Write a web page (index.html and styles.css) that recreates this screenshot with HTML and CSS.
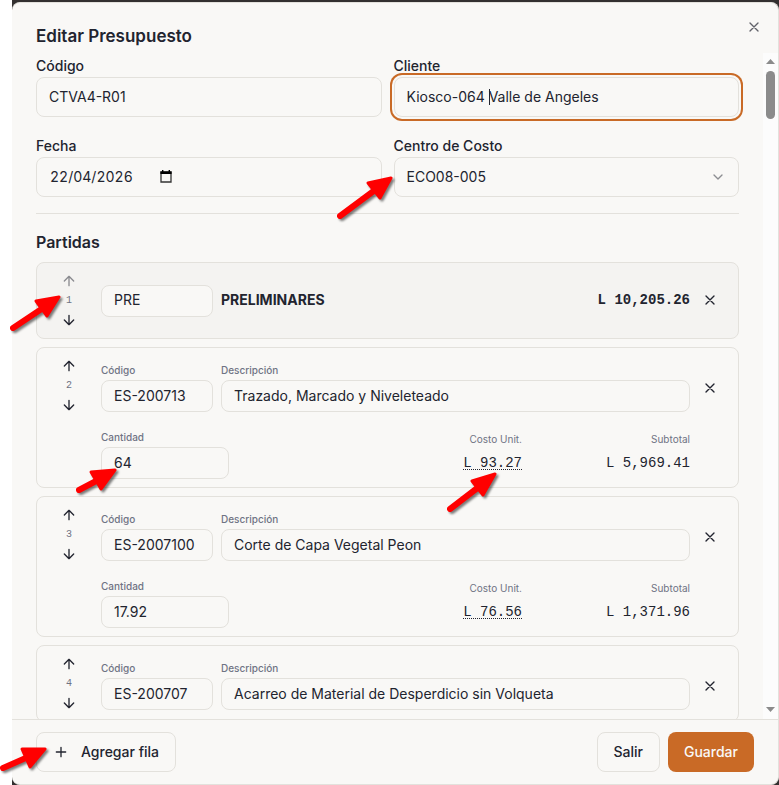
FILE: index.html
```html
<!DOCTYPE html>
<html lang="es">
<head>
    <meta charset="UTF-8">
    <meta name="viewport" content="width=device-width, initial-scale=1.0">
    <title>Editar Presupuesto</title>
    <link rel="stylesheet" href="styles.css">
</head>
<body>
    <!-- Shared icons -->
    <svg class="sprite" aria-hidden="true">
        <symbol id="icon-x" viewBox="0 0 24 24"><path d="M18 6 6 18M6 6l12 12"/></symbol>
        <symbol id="icon-up" viewBox="0 0 24 24"><path d="m5 12 7-7 7 7M12 19V5"/></symbol>
        <symbol id="icon-down" viewBox="0 0 24 24"><path d="M12 5v14M19 12l-7 7-7-7"/></symbol>
        <symbol id="icon-plus" viewBox="0 0 24 24"><path d="M5 12h14M12 5v14"/></symbol>
        <symbol id="icon-chevron" viewBox="0 0 24 24"><path d="m6 9 6 6 6-6"/></symbol>
    </svg>

    <div class="backdrop">
        <div class="modal" role="dialog" aria-labelledby="modal-title">
            <header class="modal-header">
                <h1 id="modal-title">Editar Presupuesto</h1>
                <button class="close-btn" aria-label="Cerrar"><svg class="icon"><use href="#icon-x"/></svg></button>
            </header>

            <div class="modal-body">
                <div class="content">
                    <div class="form-grid">
                        <div class="field">
                            <label for="codigo">Código</label>
                            <input class="input" id="codigo" type="text" value="CTVA4-R01">
                        </div>
                        <div class="field">
                            <label for="cliente">Cliente</label>
                            <div class="control">
                                <input class="input focused" id="cliente" type="text" value="Kiosco-064 Valle de Angeles">
                                <span class="caret"></span>
                            </div>
                        </div>
                        <div class="field">
                            <label for="fecha">Fecha</label>
                            <div class="control">
                                <input class="input date" id="fecha" type="text" value="22/04/2026">
                                <svg class="calendar" viewBox="0 0 12 13" aria-hidden="true">
                                    <path d="M1 2h10v10H1z" fill="none" stroke="#333" stroke-width="1.3"/>
                                    <path d="M.4 1.4h11.2V4H.4zM2 0h1.4v2H2zM8.600 0H10v2H8.600z"/>
                                </svg>
                            </div>
                        </div>
                        <div class="field">
                            <label for="centro">Centro de Costo</label>
                            <div class="control">
                                <select class="input" id="centro">
                                    <option>ECO08-005</option>
                                </select>
                                <svg class="icon chevron"><use href="#icon-chevron"/></svg>
                            </div>
                        </div>
                    </div>

                    <section class="partidas">
                        <h2>Partidas</h2>

                        <!-- Chapter row -->
                        <div class="row chapter">
                            <div class="order">
                                <button disabled aria-label="Subir"><svg class="icon"><use href="#icon-up"/></svg></button>
                                <span>1</span>
                                <button aria-label="Bajar"><svg class="icon"><use href="#icon-down"/></svg></button>
                            </div>
                            <input class="input small code" type="text" value="PRE" aria-label="Código">
                            <strong class="chapter-name">PRELIMINARES</strong>
                            <span class="money">L 10,205.26</span>
                            <button class="remove" aria-label="Eliminar"><svg class="icon"><use href="#icon-x"/></svg></button>
                        </div>

                        <!-- Item rows -->
                        <div class="row">
                            <div class="order">
                                <button aria-label="Subir"><svg class="icon"><use href="#icon-up"/></svg></button>
                                <span>2</span>
                                <button aria-label="Bajar"><svg class="icon"><use href="#icon-down"/></svg></button>
                            </div>
                            <div class="details">
                                <div class="line">
                                    <div class="cell code">
                                        <label for="cod-2">Código</label>
                                        <input class="input small" id="cod-2" type="text" value="ES-200713">
                                    </div>
                                    <div class="cell desc">
                                        <label for="desc-2">Descripción</label>
                                        <input class="input small" id="desc-2" type="text" value="Trazado, Marcado y Niveleteado">
                                    </div>
                                </div>
                                <div class="line">
                                    <div class="cell qty">
                                        <label for="cant-2">Cantidad</label>
                                        <input class="input small" id="cant-2" type="text" value="64">
                                    </div>
                                    <div class="cell cost">
                                        <span class="caption">Costo Unit.</span>
                                        <span class="money unit">L 93.27</span>
                                    </div>
                                    <div class="cell subtotal">
                                        <span class="caption">Subtotal</span>
                                        <span class="money">L 5,969.41</span>
                                    </div>
                                </div>
                            </div>
                            <button class="remove" aria-label="Eliminar"><svg class="icon"><use href="#icon-x"/></svg></button>
                        </div>

                        <div class="row">
                            <div class="order">
                                <button aria-label="Subir"><svg class="icon"><use href="#icon-up"/></svg></button>
                                <span>3</span>
                                <button aria-label="Bajar"><svg class="icon"><use href="#icon-down"/></svg></button>
                            </div>
                            <div class="details">
                                <div class="line">
                                    <div class="cell code">
                                        <label for="cod-3">Código</label>
                                        <input class="input small" id="cod-3" type="text" value="ES-2007100">
                                    </div>
                                    <div class="cell desc">
                                        <label for="desc-3">Descripción</label>
                                        <input class="input small" id="desc-3" type="text" value="Corte de Capa Vegetal Peon">
                                    </div>
                                </div>
                                <div class="line">
                                    <div class="cell qty">
                                        <label for="cant-3">Cantidad</label>
                                        <input class="input small" id="cant-3" type="text" value="17.92">
                                    </div>
                                    <div class="cell cost">
                                        <span class="caption">Costo Unit.</span>
                                        <span class="money unit">L 76.56</span>
                                    </div>
                                    <div class="cell subtotal">
                                        <span class="caption">Subtotal</span>
                                        <span class="money">L 1,371.96</span>
                                    </div>
                                </div>
                            </div>
                            <button class="remove" aria-label="Eliminar"><svg class="icon"><use href="#icon-x"/></svg></button>
                        </div>

                        <div class="row">
                            <div class="order">
                                <button aria-label="Subir"><svg class="icon"><use href="#icon-up"/></svg></button>
                                <span>4</span>
                                <button aria-label="Bajar"><svg class="icon"><use href="#icon-down"/></svg></button>
                            </div>
                            <div class="details">
                                <div class="line">
                                    <div class="cell code">
                                        <label for="cod-4">Código</label>
                                        <input class="input small" id="cod-4" type="text" value="ES-200707">
                                    </div>
                                    <div class="cell desc">
                                        <label for="desc-4">Descripción</label>
                                        <input class="input small" id="desc-4" type="text" value="Acarreo de Material de Desperdicio sin Volqueta">
                                    </div>
                                </div>
                            </div>
                            <button class="remove" aria-label="Eliminar"><svg class="icon"><use href="#icon-x"/></svg></button>
                        </div>
                    </section>
                </div>

                <!-- Scrollbar -->
                <div class="scrollbar" aria-hidden="true">
                    <svg viewBox="0 0 9 5"><path d="M0 5 4.500 0 9 5z"/></svg>
                    <div class="thumb"></div>
                    <svg viewBox="0 0 9 5"><path d="M0 0h9L4.500 5z"/></svg>
                </div>
            </div>

            <footer class="modal-footer">
                <button class="btn add"><svg class="icon"><use href="#icon-plus"/></svg>Agregar fila</button>
                <button class="btn">Salir</button>
                <button class="btn primary">Guardar</button>
            </footer>
        </div>
    </div>

    <!-- Red pointer arrows -->
    <svg class="arrows" viewBox="0 0 779 785" aria-hidden="true">
        <g><path class="shaft" d="M13 328 43 308"/><path class="head" d="M59 297 36 301 47 316z"/></g>
        <g><path class="shaft" d="M340 216 375 190"/><path class="head" d="M391 178 368 183 380 198z"/></g>
        <g><path class="shaft" d="M79 490 98 480"/><path class="head" d="M115 470 91 472 101 489z"/></g>
        <g><path class="shaft" d="M450 509 480 486"/><path class="head" d="M495 474 472 481 483 495z"/></g>
        <g><path class="shaft" d="M3 768 28 757"/><path class="head" d="M45 749 22 749 30 767z"/></g>
    </svg>
</body>
</html>
```
FILE: styles.css
```css
* {
    box-sizing: border-box;
}

body {
    margin: 0;
    height: 100vh;
    overflow: hidden;
    background: #ffffff;
    color: #22242f;
    font-family: 'Inter', sans-serif;
    font-size: 14px;
    line-height: 24px;
}

button, input, select {
    font: inherit;
    color: inherit;
}

button {
    display: flex;
    align-items: center;
    justify-content: center;
    padding: 0;
    border: none;
    background: none;
    cursor: pointer;
}

.sprite {
    position: absolute;
    width: 0;
    height: 0;
}

.icon {
    width: 16px;
    height: 16px;
    flex-shrink: 0;
    fill: none;
    stroke: currentColor;
    stroke-width: 2;
    stroke-linecap: round;
    stroke-linejoin: round;
}

/* Modal */
.backdrop {
    height: 100vh;
    margin-left: 12px;
    padding-top: 2px;
    background: #333030;
}

.modal {
    position: relative;
    display: flex;
    flex-direction: column;
    height: 100%;
    border: 1px solid #e3e1dc;
    border-left: none;
    border-radius: 8px;
    background: #f9f8f6;
    overflow: hidden;
}

.modal-header {
    padding: 19px 24px 3px;
}

h1 {
    margin: 0;
    font-size: 17px;
    line-height: 28px;
    font-weight: 600;
}

.close-btn {
    position: absolute;
    top: 16px;
    right: 16px;
    opacity: 0.7;
}

.modal-body {
    display: flex;
    flex: 1;
    min-height: 0;
}

.content {
    flex: 1;
    min-width: 0;
    padding: 0 24px;
    overflow: hidden;
}

.scrollbar {
    display: flex;
    flex-direction: column;
    align-items: center;
    width: 15px;
    padding: 6px 0 7px;
    background: #fcfcfc;
}

.scrollbar svg {
    width: 9px;
    height: 5px;
    fill: #8b8b8b;
}

.thumb {
    width: 9px;
    height: 48px;
    margin: 7px 0 auto;
    border-radius: 5px;
    background: #8b8b8b;
}

/* Form */
.form-grid {
    display: grid;
    grid-template-columns: 1fr 1fr;
    gap: 16px 12px;
    padding-bottom: 16px;
    border-bottom: 1px solid #e3e1dc;
}

.field label {
    display: block;
    padding-top: 2px;
    line-height: 22px;
    font-weight: 500;
}

.control {
    position: relative;
}

.input {
    display: block;
    width: 100%;
    height: 40px;
    padding: 0 12px 2px;
    border: 1px solid #e3e1dc;
    border-radius: 8px;
    background: #f9f8f6;
    outline: none;
    appearance: none;
}

select.input {
    padding-bottom: 0;
}

.input.small {
    height: 32px;
}

.input.focused {
    box-shadow: 0 0 0 2px #f9f8f6, 0 0 0 4px #c96a26;
}

.input.date {
    padding-left: 13px;
    font-variant-numeric: tabular-nums;
}

.caret {
    position: absolute;
    top: 12px;
    left: 95px;
    width: 1px;
    height: 16px;
    background: #22242f;
}

.calendar {
    position: absolute;
    top: 13px;
    left: 124px;
    width: 12px;
    height: 13px;
}

.chevron {
    position: absolute;
    top: 12px;
    right: 13px;
    opacity: 0.5;
}

/* Budget rows */
.partidas {
    display: flex;
    flex-direction: column;
    gap: 8px;
    padding-top: 16px;
}

h2 {
    margin: 0;
    font-size: 16px;
    line-height: 24px;
    font-weight: 600;
}

.row {
    display: flex;
    gap: 8px;
    padding: 8px 16px 8px 8px;
    border: 1px solid #e3e1dc;
    border-radius: 8px;
}

.row.chapter {
    align-items: center;
    background: #f4f3f1;
}

.order {
    display: flex;
    flex-direction: column;
    align-items: center;
    gap: 2px;
    width: 48px;
}

.order button {
    width: 20px;
    height: 20px;
}

.order button:disabled {
    opacity: 0.5;
}

.order span {
    color: #6f7384;
    font-family: 'Liberation Mono', monospace;
    font-size: 10px;
    line-height: 15px;
}

.code {
    width: 112px;
}

.chapter-name {
    flex: 1;
    font-weight: 700;
}

.money {
    font-family: 'Liberation Mono', monospace;
    line-height: 20px;
}

.chapter .money {
    font-weight: 700;
}

.details {
    display: flex;
    flex: 1;
    flex-direction: column;
    gap: 17px;
    min-width: 0;
    padding-top: 6px;
}

.line {
    display: flex;
    gap: 8px;
}

.cell {
    display: flex;
    flex-direction: column;
    gap: 2px;
}

.cell label,
.caption {
    color: #6f7384;
    font-size: 10px;
    line-height: 16px;
}

.cell label {
    font-weight: 500;
}

.desc {
    flex: 1;
}

.qty {
    width: 128px;
}

.cost {
    flex: 1;
}

.cost,
.subtotal {
    align-items: flex-end;
    padding-top: 2px;
    gap: 6px;
}

.subtotal {
    width: 160px;
}

.unit {
    text-decoration: underline dotted 1px;
    text-underline-offset: 2px;
}

.remove {
    width: 24px;
    height: 24px;
    margin-top: 20px;
}

.chapter .remove {
    margin-top: 0;
}

.chapter .chapter-name,
.chapter .money,
.chapter .remove {
    padding-bottom: 2px;
}

/* Footer */
.modal-footer {
    display: flex;
    gap: 8px;
    padding: 12px 24px;
    padding-right: 24px;
    border-top: 1px solid #e3e1dc;
}

.btn {
    height: 40px;
    padding: 0 16px;
    border: 1px solid #e3e1dc;
    border-radius: 8px;
    font-weight: 500;
}

.btn.add {
    gap: 12px;
    margin-right: auto;
}

.btn.primary {
    border: none;
    background: #c96a26;
    color: #f9f8f6;
}

.arrows {
    position: absolute;
    top: 0;
    left: 0;
    width: 779px;
    height: 785px;
    pointer-events: none;
}

.arrows g {
    filter: drop-shadow(2px 2px 1px rgba(0, 0, 0, 0.5));
}

.arrows path {
    stroke: #ff0000;
    stroke-linecap: round;
    stroke-linejoin: round;
}

.shaft {
    stroke-width: 6;
}

.head {
    fill: #ff0000;
    stroke-width: 3;
}
```
